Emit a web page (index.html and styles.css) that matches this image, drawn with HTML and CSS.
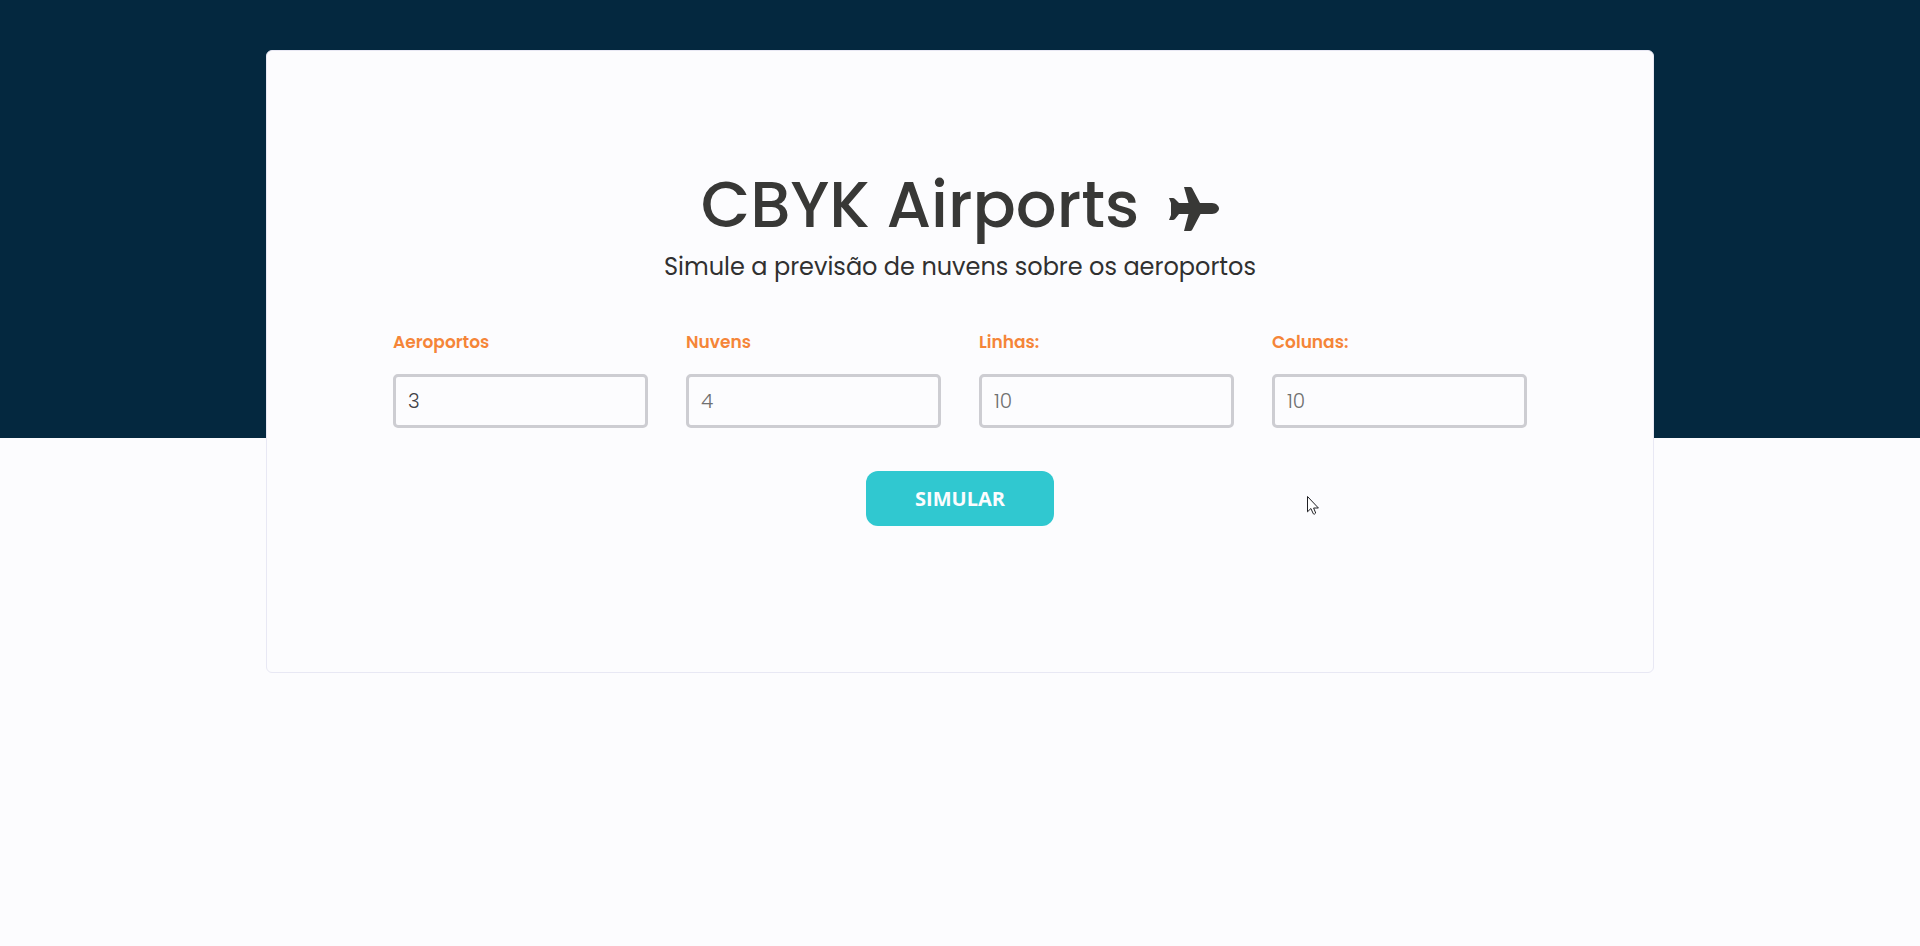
FILE: index.html
```html
<!DOCTYPE html>
<html lang="pt-BR">
<head>
<meta charset="utf-8">
<meta name="viewport" content="width=device-width, initial-scale=1">
<title>CBYK Airports</title>
<link rel="stylesheet" href="styles.css">
</head>
<body>
<main class="page">
  <section class="card">
    <header class="header">
      <h1 class="title">CBYK Airports
        <svg class="plane" viewBox="0 0 50 44" aria-hidden="true"><path d="M15 0h6q1.500 0 2.200 1.200L31 16h12c4 0 7 3 7 5.500S47 27 43 27H31.500l-8.300 15.800Q22.500 44 21 44h-6l4.500-17H10l-4 5q-1 1-2 1H0l2-5V16L0 11h4q1 0 2 1l4 4h9.500z"/></svg>
      </h1>
      <p class="subtitle">Simule a previsão de nuvens sobre os aeroportos</p>
    </header>
    <form class="form">
      <div class="fields">
        <div class="field">
          <label class="label" for="airports">Aeroportos</label>
          <input class="input" id="airports" type="text" inputmode="numeric" value="3">
        </div>
        <div class="field">
          <label class="label" for="clouds">Nuvens</label>
          <input class="input" id="clouds" type="text" inputmode="numeric" placeholder="4">
        </div>
        <div class="field">
          <label class="label" for="rows">Linhas:</label>
          <input class="input" id="rows" type="text" inputmode="numeric" placeholder="10">
        </div>
        <div class="field">
          <label class="label" for="columns">Colunas:</label>
          <input class="input" id="columns" type="text" inputmode="numeric" placeholder="10">
        </div>
      </div>
      <button class="submit" type="button">SIMULAR</button>
    </form>
    <svg class="pointer" viewBox="0 0 12 19" aria-hidden="true"><path d="M.5.5v15.3l3.400-3.300 2.400 5.300q1.200 1 2.400-.8l-2.100-5h4.800z"/></svg>
  </section>
</main>
</body>
</html>
```
FILE: styles.css
```css
*, *::before, *::after {
  box-sizing: border-box;
}

body {
  margin: 0;
  min-height: 100vh;
  background: linear-gradient(#04283f 438px, #fcfcfe 438px) no-repeat #fcfcfe;
  color: #383836;
  font-family: Poppins, Inter, sans-serif;
}

.page {
  padding: 50px 16px;
}

.card {
  position: relative;
  max-width: 1388px;
  margin: 0 auto;
  padding: 115px 126px 146px;
  border: 1px solid #e8e8f4;
  border-radius: 6px;
  background: #fcfcfe;
}

.header {
  text-align: center;
}

.title {
  display: flex;
  justify-content: center;
  align-items: center;
  gap: 30px;
  margin: 0;
  font-size: 64px;
  font-weight: 500;
  line-height: 78px;
}

.plane {
  width: 50px;
  height: 44px;
  margin-top: 8px;
  fill: currentColor;
}

.subtitle {
  margin: 6px 0 0;
  color: #303030;
  font-size: 24px;
  font-weight: 400;
  line-height: 34px;
}

.fields {
  display: grid;
  grid-template-columns: repeat(4, 1fr);
  gap: 38px;
}

.form {
  display: flex;
  flex-direction: column;
  gap: 43px;
  margin-top: 46px;
}

.field {
  display: flex;
  flex-direction: column;
  gap: 20px;
}

.label {
  color: #f58538;
  font-size: 17px;
  font-weight: 600;
  line-height: 24px;
}

.input {
  width: 100%;
  height: 54px;
  padding: 0 12px;
  border: 3px solid #cdcdd2;
  border-radius: 5px;
  background: #fcfcfe;
  color: #414146;
  font: 300 20px Poppins, Inter, sans-serif;
}

.input::placeholder {
  color: #707070;
  opacity: 1;
}

.submit {
  align-self: center;
  width: 188px;
  height: 55px;
  border: 0;
  border-radius: 12px;
  background: #30c8d0;
  color: #fcfcfe;
  font: 700 20px "Open Sans", sans-serif;
}

.pointer {
  position: absolute;
  top: 445px;
  left: 75%;
  width: 12px;
  height: 19px;
  fill: #fff;
  stroke: #202024;
}

@media (max-width: 900px) {
  .card {
    padding: 48px 24px;
  }

  .title {
    font-size: 40px;
    line-height: 48px;
  }

  .fields {
    grid-template-columns: repeat(2, 1fr);
  }
}
```
